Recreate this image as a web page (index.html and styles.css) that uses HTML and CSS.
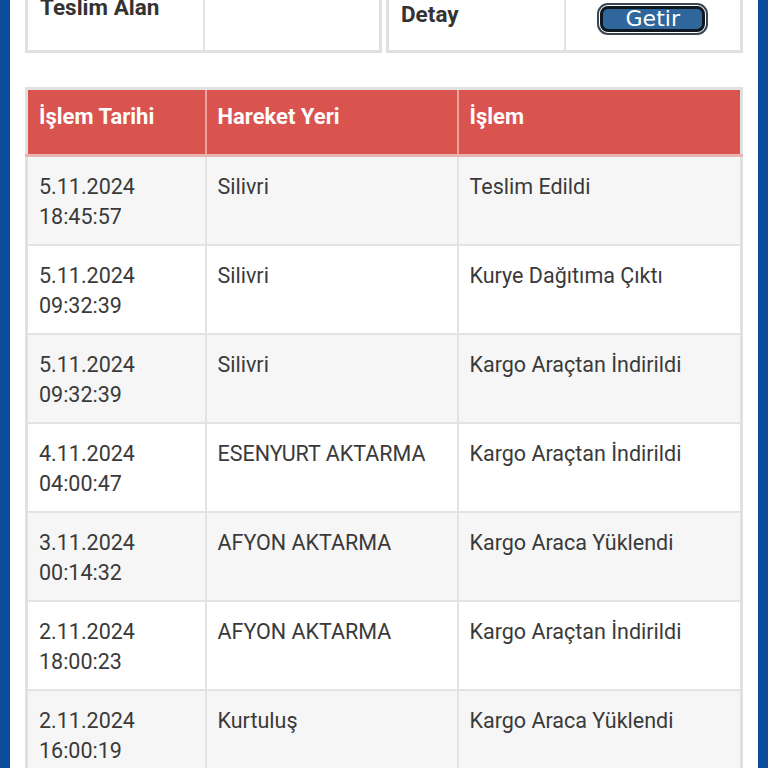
FILE: index.html
```html
<!DOCTYPE html>
<html lang="tr">
<head>
<meta charset="utf-8">
<link rel="stylesheet" href="styles.css">
</head>
<body>
<div class="frame">
  <div class="page">
    <div class="top">
      <table class="info">
        <tr><th class="lbl-a">Teslim Alan</th><td></td></tr>
      </table>
      <table class="info">
        <tr><th class="lbl-b">Detay</th><td class="btn-cell"><button class="btn">Getir</button></td></tr>
      </table>
    </div>
    <table class="moves">
      <colgroup><col class="w1"><col class="w2"><col></colgroup>
      <thead>
        <tr><th>İşlem Tarihi</th><th>Hareket Yeri</th><th>İşlem</th></tr>
      </thead>
      <tbody>
        <tr><td>5.11.2024<br>18:45:57</td><td>Silivri</td><td>Teslim Edildi</td></tr>
        <tr><td>5.11.2024<br>09:32:39</td><td>Silivri</td><td>Kurye Dağıtıma Çıktı</td></tr>
        <tr><td>5.11.2024<br>09:32:39</td><td>Silivri</td><td>Kargo Araçtan İndirildi</td></tr>
        <tr><td>4.11.2024<br>04:00:47</td><td>ESENYURT AKTARMA</td><td>Kargo Araçtan İndirildi</td></tr>
        <tr><td>3.11.2024<br>00:14:32</td><td>AFYON AKTARMA</td><td>Kargo Araca Yüklendi</td></tr>
        <tr><td>2.11.2024<br>18:00:23</td><td>AFYON AKTARMA</td><td>Kargo Araçtan İndirildi</td></tr>
        <tr><td>2.11.2024<br>16:00:19</td><td>Kurtuluş</td><td>Kargo Araca Yüklendi</td></tr>
      </tbody>
    </table>
  </div>
</div>
</body>
</html>
```
FILE: styles.css
```css
html, body {
  margin: 0;
  padding: 0;
  height: 768px;
  overflow: hidden;
  background: #ffffff;
}
body {
  font-family: Roboto, "Noto Sans", sans-serif;
  color: #333;
}
.frame {
  height: 768px;
  border-left: 10px solid #0b4c9c;
  border-right: 10px solid #0b4c9c;
  background: #fff;
  overflow: hidden;
}
.page {
  padding: 0 15px;
}
.top {
  display: grid;
  grid-template-columns: 1fr 1fr;
  gap: 4px;
  margin-top: -22px;
}
.info {
  width: 100%;
  border-collapse: collapse;
  border: 3px solid #e1e1e1;
  height: 75px;
  table-layout: fixed;
}
.info th, .info td {
  width: 50%;
  border: 2px solid #e3e3e3;
  text-align: left;
  vertical-align: middle;
  font-size: 22.5px;
  font-weight: 700;
  padding: 0 12px;
  color: #333;
}
.info .lbl-a {
  padding-bottom: 17px;
}
.info .lbl-b {
  padding-bottom: 4px;
}
.btn-cell {
  text-align: center !important;
}
.btn {
  font-family: "DejaVu Sans", sans-serif;
  font-size: 22px;
  color: #fff;
  background: #2f679c;
  border: 3px solid #0f1720;
  border-radius: 8px;
  outline: 2px solid #3b4652;
  outline-offset: 1px;
  width: 105px;
  height: 26px;
  line-height: 18px;
  padding: 0;
  margin-top: 6px;
  display: inline-block;
}
.moves {
  margin-top: 34px;
  width: 100%;
  border-collapse: collapse;
  border: 3px solid #e1e1e1;
  table-layout: fixed;
}
.w1 { width: 179px; }
.w2 { width: 252px; }
.moves th {
  background: #d9534f;
  color: #fff;
  font-weight: 700;
  font-size: 22px;
  text-align: left;
  height: 52px;
  padding: 0 11px 12px;
  border: 2px solid #efa19e;
  border-top: 0;
  border-bottom: 3px solid #e9b3b1;
}
.moves td {
  font-size: 21.5px;
  line-height: 30px;
  vertical-align: top;
  padding: 15px 11px 12px;
  border: 2px solid #e3e3e3;
  color: #3a3a3a;
}
.moves tbody tr:nth-child(odd) td {
  background: #f6f6f6;
}
.moves tbody tr:nth-child(even) td {
  background: #ffffff;
}
```
